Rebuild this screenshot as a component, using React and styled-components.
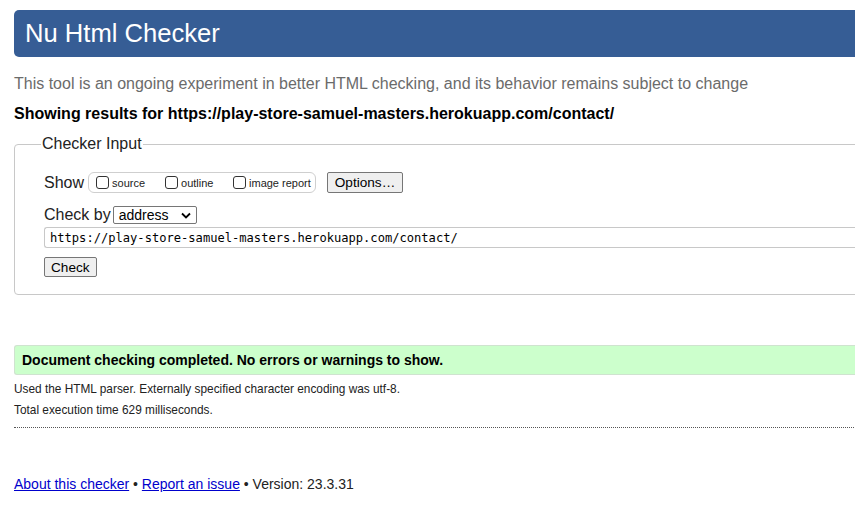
import React from 'react';
import styled, {createGlobalStyle} from 'styled-components';

const GlobalStyle = createGlobalStyle`
    body {
        margin: 0;
        background: #fff;
        color: #000;
        font-family: "Liberation Sans", Arial, sans-serif;
        overflow: hidden;
    }
`;

const Page = styled.div`
    width: 1000px;
    padding: 10px 0 0 14px;
`;

const Header = styled.h1`
    margin: 0;
    height: 47px;
    padding-left: 11px;
    background: #365d95;
    color: #fff;
    font-size: 25.6px;
    font-weight: normal;
    line-height: 47px;
    border-radius: 5px;
`;

const Intro = styled.p`
    margin: 18px 0 0;
    color: #6b6b6b;
    font-size: 16px;
    line-height: 18px;
`;

const Showing = styled.p`
    margin: 12px 0 0;
    font-size: 16px;
    font-weight: bold;
    line-height: 18px;
`;

const Fieldset = styled.fieldset`
    margin: 12px 0 0;
    padding: 0 0 17px 29px;
    border: 1px solid #c8c8c8;
    border-radius: 4px;
    min-width: 0;
`;

const Legend = styled.legend`
    margin-left: -3px;
    padding: 0 1px;
    font-size: 16px;
    line-height: 18px;
    color: #222;
`;

const Row = styled.div`
    display: flex;
    align-items: center;
    margin-top: ${p => p.$gap}px;
    font-size: 16px;
    color: #222;
`;

const Label = styled.span`
    margin-right: ${p => p.$space || 4}px;
`;

const CheckGroup = styled.div`
    display: flex;
    align-items: center;
    height: 19px;
    padding: 0 4px 0 7px;
    border: 1px solid #cfcfcf;
    border-radius: 6px;
`;

const Option = styled.label`
    display: flex;
    align-items: center;
    width: ${p => p.$w}px;
    font-size: 11px;
    color: #222;
`;

const Box = styled.span`
    width: 11px;
    height: 11px;
    margin-right: 3px;
    border: 1px solid #333;
    border-radius: 3px;
    background: #fff;
`;

const Button = styled.button`
    height: ${p => p.$h}px;
    padding: 0 ${p => p.$pad}px;
    margin-left: ${p => p.$left || 0}px;
    border: 1px solid #767676;
    border-radius: 2px;
    background: #efefef;
    font-family: "Liberation Sans", Arial, sans-serif;
    font-size: 13.6px;
    color: #000;
`;

const SelectBox = styled.div`
    display: flex;
    align-items: center;
    justify-content: space-between;
    width: 84px;
    height: 18px;
    padding: 0 5px 0 5px;
    box-sizing: border-box;
    border: 1px solid #767676;
    border-radius: 2px;
    font-size: 14px;
    color: #000;
`;

const UrlInput = styled.div`
    flex: 1;
    height: 21px;
    box-sizing: border-box;
    padding-left: 5px;
    border: 1px solid #c8c8c8;
    border-right: none;
    border-radius: 3px 0 0 3px;
    font-family: "DejaVu Sans Mono", monospace;
    font-size: 12.1px;
    line-height: 20px;
    color: #000;
`;

const Success = styled.div`
    margin-top: 50px;
    height: 30px;
    box-sizing: border-box;
    padding-left: 7px;
    border: 1px solid #cfe3cf;
    border-right: none;
    border-radius: 3px 0 0 3px;
    background: #ccffcc;
    font-size: 14px;
    font-weight: bold;
    line-height: 28px;
`;

const Detail = styled.p`
    margin: ${p => p.$top}px 0 0;
    font-size: 11.85px;
    line-height: 14px;
    color: #222;
`;

const Rule = styled.hr`
    margin: 10px 0 0;
    border: none;
    border-top: 1px dotted #555;
`;

const Footer = styled.p`
    margin: 48px 0 0;
    font-size: 14px;
    line-height: 16px;
    color: #222;

    a {
        color: #0000cc;
    }
`;

const Chevron = () => (
    <svg width="10" height="7" viewBox="0 0 10 7">
        <path d="M1 1.5 L5 5.5 L9 1.5" fill="none" stroke="#000" strokeWidth="1.8" />
    </svg>
);

export default function App() {
    return (
        <Page>
            <GlobalStyle />
            <Header>Nu Html Checker</Header>
            <Intro>This tool is an ongoing experiment in better HTML checking, and its behavior remains subject to change</Intro>
            <Showing>Showing results for https://play-store-samuel-masters.herokuapp.com/contact/</Showing>
            <Fieldset>
                <Legend>Checker Input</Legend>
                <Row $gap={19}>
                    <Label>Show</Label>
                    <CheckGroup>
                        <Option $w={69}><Box />source</Option>
                        <Option $w={68}><Box />outline</Option>
                        <Option><Box />image report</Option>
                    </CheckGroup>
                    <Button $h={21} $pad={7} $left={11}>Options…</Button>
                </Row>
                <Row $gap={13}>
                    <Label $space={2}>Check by</Label>
                    <SelectBox>address<Chevron /></SelectBox>
                </Row>
                <Row $gap={3}>
                    <UrlInput>https://play-store-samuel-masters.herokuapp.com/contact/</UrlInput>
                </Row>
                <Row $gap={9}>
                    <Button $h={20} $pad={6}>Check</Button>
                </Row>
            </Fieldset>
            <Success>Document checking completed. No errors or warnings to show.</Success>
            <Detail $top={7}>Used the HTML parser. Externally specified character encoding was utf-8.</Detail>
            <Detail $top={7}>Total execution time 629 milliseconds.</Detail>
            <Rule />
            <Footer>
                <a href="#about">About this checker</a> • <a href="#report">Report an issue</a> • Version: 23.3.31
            </Footer>
        </Page>
    );
}
